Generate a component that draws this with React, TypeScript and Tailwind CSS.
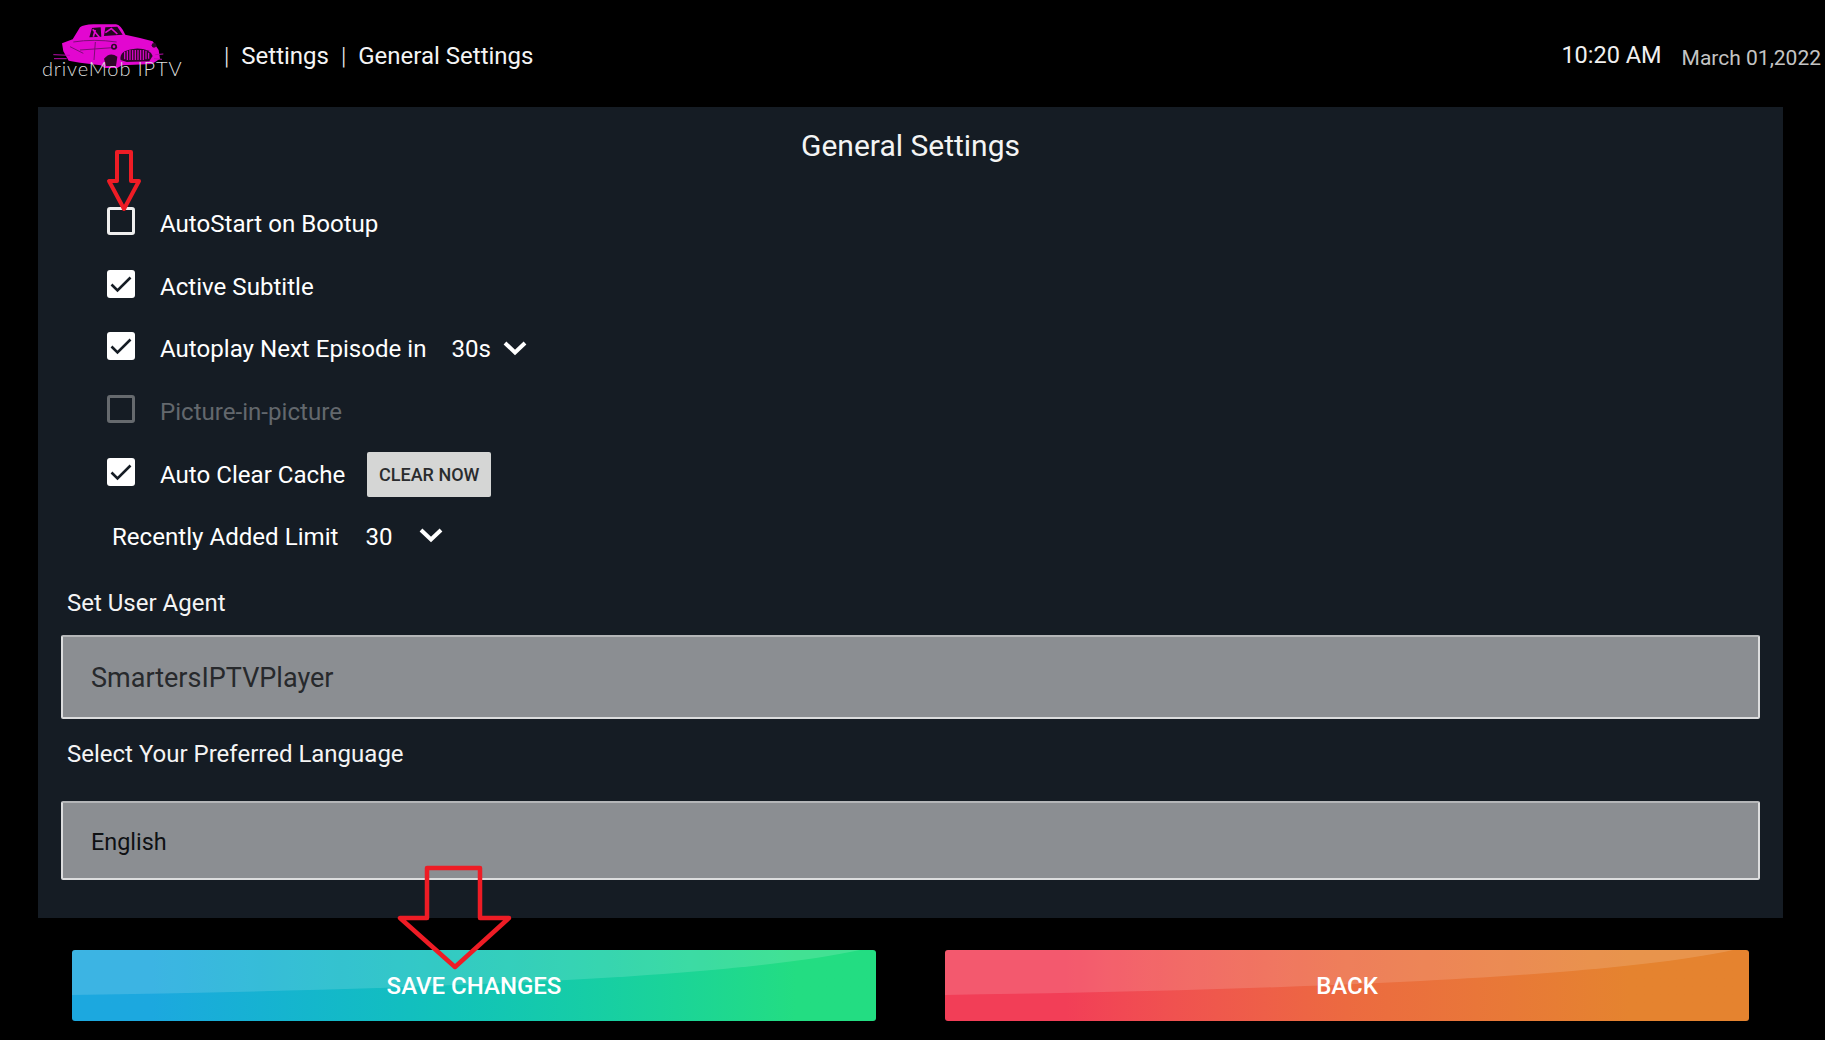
import React from "react";

const font = { fontFamily: "Roboto, 'Liberation Sans', sans-serif" };

function Check({ state }: { state: "on" | "off" | "disabled" }) {
  if (state === "on") {
    return (
      <div className="w-[28px] h-[28px] mt-[-3px] rounded-[3px] bg-white flex items-center justify-center shrink-0">
        <svg width="24" height="24" viewBox="0 0 24 24" fill="none">
          <path d="M2.5 12.5 L8.5 18.5 L21.5 5.5" stroke="#151c24" strokeWidth="2.6" />
        </svg>
      </div>
    );
  }
  return (
    <div
      className={
        state === "off"
          ? "w-[28px] h-[28px] mt-[-3px] rounded-[3px] border-[3px] border-[#eeeeee] shrink-0"
          : "w-[28px] h-[28px] mt-[-3px] rounded-[3px] border-[3px] border-[#666a6e] shrink-0"
      }
    />
  );
}

function Chevron() {
  return (
    <svg width="24" height="16" viewBox="0 0 24 16" fill="none" className="shrink-0">
      <path d="M2 3 L12 12.5 L22 3" stroke="#ffffff" strokeWidth="4" />
    </svg>
  );
}

function Logo() {
  return (
    <div className="relative w-[130px] h-[60px] ml-[40px] shrink-0 self-start mt-[20px]">
      <svg width="180" height="80" viewBox="0 0 540 240" className="absolute left-[-10px] top-[-10px]">
        <path
          d="M96 100 L128 88 L150 52 Q160 44 190 43 L258 43 Q272 44 286 74 L330 84 L368 94 L386 120 L390 146 L366 162 L276 166 L262 174 L224 174 L212 166 L150 158 L116 152 L100 124 Z"
          fill="#e207d0"
        />
        <path d="M70 134 L120 136 M72 146 L110 146 M376 134 L400 132 M372 146 L396 148" stroke="#b80cac" strokeWidth="3" />
        <path d="M178 82 L186 54 L212 52 L214 80 Z M222 78 L226 52 L262 50 L278 74 Z" fill="#22071f" />
        <path d="M188 58 L208 82 M226 68 L244 56 L262 72 M196 60 L190 80" stroke="#e207d0" strokeWidth="5" fill="none" />
        <path d="M272 150 Q266 120 316 116 Q358 114 368 138 L358 154 L290 156 Z" fill="#2e0729" />
        <path
          d="M284 126 L284 148 M292 122 L292 150 M300 120 L300 150 M308 120 L308 150 M316 120 L316 150 M324 120 L324 150 M332 120 L332 150 M340 120 L340 150 M348 122 L348 148 M356 128 L356 146"
          stroke="#e207d0"
          strokeWidth="3.5"
        />
        <path d="M130 96 Q190 86 260 96 M150 120 L262 112 M196 96 L192 150 M120 110 L160 130" stroke="#7d0d76" strokeWidth="3" fill="none" />
        <path d="M222 146 Q240 124 262 140 L258 168 L228 168 Z" fill="#2e0729" />
        <circle cx="252" cy="110" r="9" fill="#2e0729" />
        <circle cx="372" cy="106" r="7" fill="#2e0729" />
        <circle cx="252" cy="110" r="4" fill="#e207d0" />
      </svg>
      <span
        className="absolute left-[2px] top-[36px] text-[20px] leading-[24px] font-light text-[#dcdcdc] tracking-[0.85px] whitespace-nowrap"
        style={{ fontFamily: "Lato, 'Open Sans', sans-serif" }}
      >
        driveMob IPTV
      </span>
    </div>
  );
}

function GradientButton({ label, gradient, className }: { label: string; gradient: string; className: string }) {
  return (
    <div className={`relative h-[71px] w-[804px] rounded-[3px] flex items-center justify-center overflow-hidden ${gradient} ${className}`}>
      <svg width="804" height="71" viewBox="0 0 804 71" className="absolute inset-0">
        <path d="M0 0 L788 0 C660 28 340 40 0 45 Z" fill="#ffffff" fillOpacity="0.14" />
      </svg>
      <span className="relative text-white text-[24px] font-medium leading-none mt-[1px]">{label}</span>
    </div>
  );
}

function Row({ children, className = "" }: { children: React.ReactNode; className?: string }) {
  return <div className={`flex items-center h-[62.8px] text-[24.1px] text-white leading-none ${className}`}>{children}</div>;
}

export default function App() {
  return (
    <div className="relative w-[1825px] h-[1040px] bg-black overflow-hidden flex flex-col" style={font}>
      <header className="h-[107px] shrink-0 flex items-center text-white">
        <Logo />
        <div className="flex items-center text-[24px] leading-none ml-[54px] mt-[4px] text-[#f4f4f4]">
          <span className="font-light">|</span>
          <span className="ml-[12px]">Settings</span>
          <span className="ml-[12px] font-light">|</span>
          <span className="ml-[12px]">General Settings</span>
        </div>
        <div className="ml-auto flex items-center mt-[4px] pr-[4px]">
          <span className="text-[23.5px] leading-none text-[#f0f0f0] mr-[20px]">10:20 AM</span>
          <span className="text-[21px] leading-none text-[#c4c4c4] mt-[6px]">March 01,2022</span>
        </div>
      </header>

      <main className="ml-[38px] w-[1745px] h-[811px] bg-[#151c24] shrink-0 relative">
        <h1 className="text-center text-[30px] leading-none text-[#f4f4f4] pt-[24px] h-[84px]">General Settings</h1>

        <div className="pl-[69px]">
          <Row>
            <Check state="off" />
            <span className="ml-[25px] mt-[3px]">AutoStart on Bootup</span>
          </Row>
          <Row>
            <Check state="on" />
            <span className="ml-[25px] mt-[3px]">Active Subtitle</span>
          </Row>
          <Row>
            <Check state="on" />
            <span className="ml-[25px] mt-[3px]">Autoplay Next Episode in</span>
            <span className="ml-[25px] mt-[3px]">30s</span>
            <span className="ml-[12px]"><Chevron /></span>
          </Row>
          <Row>
            <Check state="disabled" />
            <span className="ml-[25px] mt-[3px] text-[#63686d]">Picture-in-picture</span>
          </Row>
          <Row>
            <Check state="on" />
            <span className="ml-[25px] mt-[3px]">Auto Clear Cache</span>
            <div className="ml-[22px] mt-[2px] w-[124px] h-[45px] rounded-[2px] bg-[#d5d6d5] flex items-center justify-center text-[#2a2c2e] text-[18px] font-medium">
              CLEAR NOW
            </div>
          </Row>
          <Row className="pl-[5px]">
            <span className="mt-[1px]">Recently Added Limit</span>
            <span className="ml-[27px] mt-[1px]">30</span>
            <span className="ml-[27px] mt-[-2px]"><Chevron /></span>
          </Row>
        </div>

        <div className="ml-[29px] mt-[23px] text-[24px] leading-none text-[#f4f4f4]">Set User Agent</div>
        <div className="mx-[23px] mt-[20px] h-[84px] bg-[#8b8e92] border-2 border-white/70 border-t-[#b4b6b8] rounded-[2px] flex items-center pl-[28px] pt-[2px] text-[27px] text-[#27292c]">
          SmartersIPTVPlayer
        </div>
        <div className="ml-[29px] mt-[23px] text-[24px] leading-none text-[#f4f4f4]">Select Your Preferred Language</div>
        <div className="mx-[23px] mt-[35px] h-[79px] bg-[#8b8e92] border-2 border-white/70 border-t-[#b4b6b8] rounded-[2px] flex items-center pl-[28px] pt-[4px] text-[23.4px] text-[#0f1113]">
          English
        </div>
      </main>

      <footer className="flex pt-[32px] pl-[72px]">
        <GradientButton
          label="SAVE CHANGES"
          gradient="bg-gradient-to-r from-[#1ca8df] from-10% to-[#23dd82] to-90%"
          className=""
        />
        <GradientButton
          label="BACK"
          gradient="bg-gradient-to-r from-[#f23e57] from-15% via-[#ec6a40] to-[#e5832f] to-85%"
          className="ml-[69px]"
        />
      </footer>

      <svg className="absolute left-[106px] top-[149px]" width="36" height="64" viewBox="0 0 36 64" fill="none">
        <path d="M11 3 H25 V32 H33 L18 60 L3 32 H11 Z" stroke="#ee1c25" strokeWidth="4" strokeLinejoin="round" />
      </svg>
      <svg className="absolute left-[397px] top-[864px]" width="116" height="108" viewBox="0 0 116 108" fill="none">
        <path d="M30 4 H83 V54 H112 L58 103 L3 54 H30 Z" stroke="#ee1c25" strokeWidth="4.5" strokeLinejoin="round" />
      </svg>
    </div>
  );
}
